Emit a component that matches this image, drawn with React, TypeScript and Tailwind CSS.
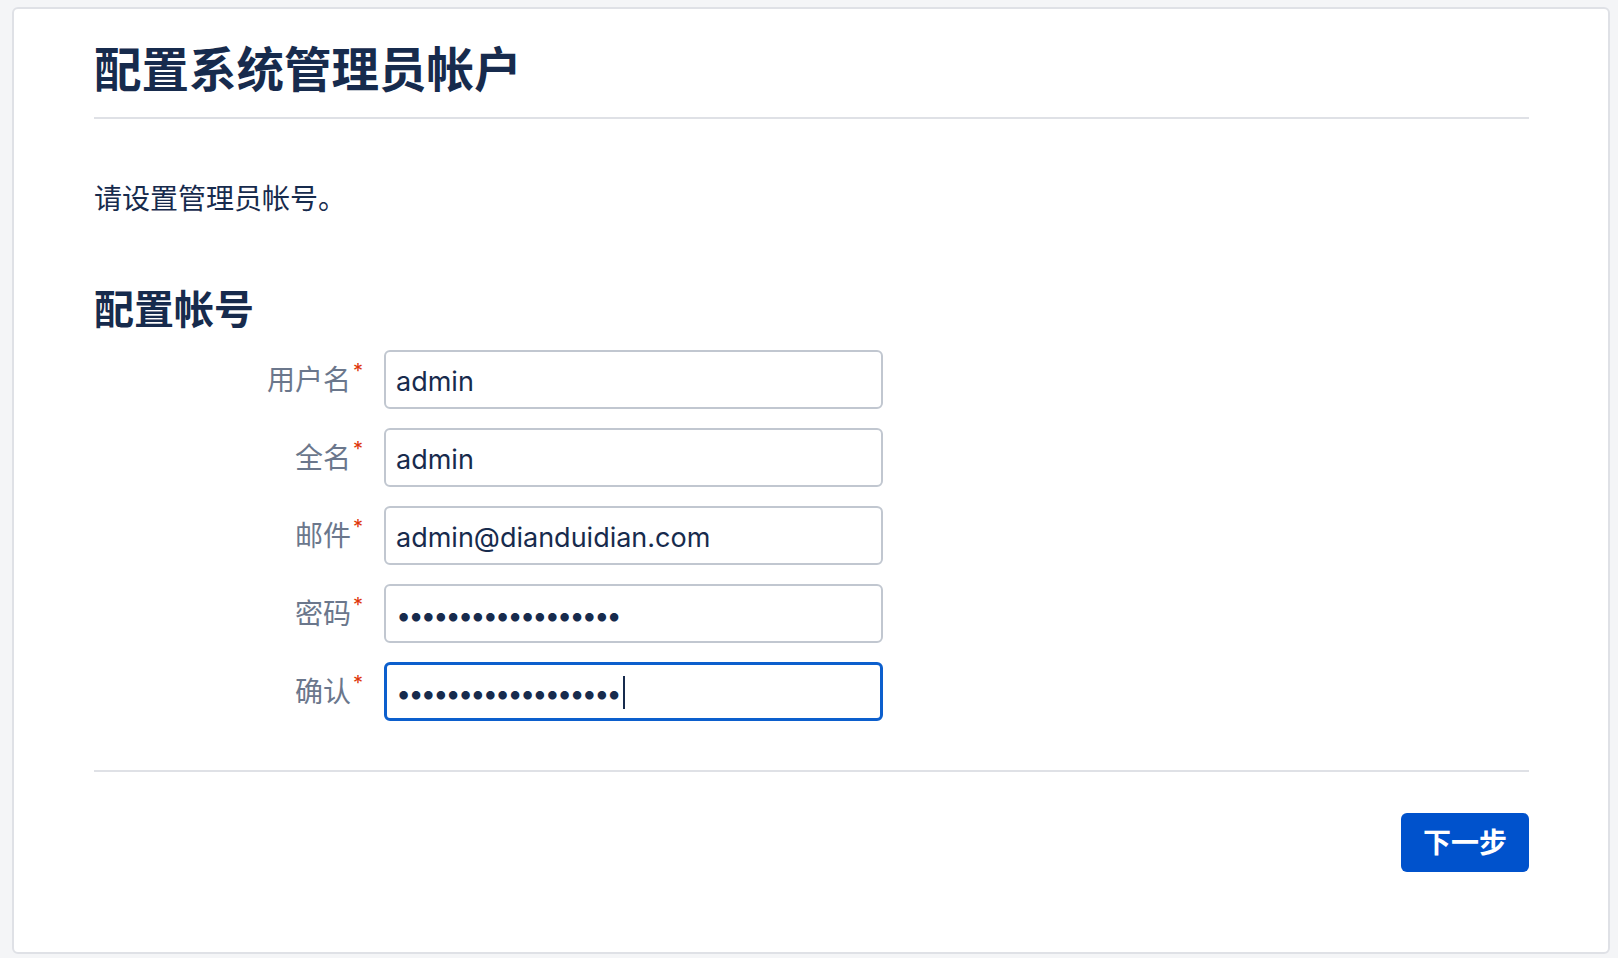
const fields = [
  { label: "用户名", type: "text", value: "admin" },
  { label: "全名", type: "text", value: "admin" },
  { label: "邮件", type: "email", value: "admin@dianduidian.com" },
  { label: "密码", type: "password", value: "passwordpassword12" },
];

const font = "font-['Inter','Noto_Sans_CJK_SC',sans-serif]";

function Label({ text }: { text: string }) {
  return (
    <label className="w-[269px] shrink-0 text-right text-[28px] text-[#6b778c] leading-none">
      {text}
      <span className="relative -top-[12px] ml-[2px] text-[20px] text-[#de350b]">*</span>
    </label>
  );
}

export default function App() {
  return (
    <div className={`min-h-screen bg-[#f4f5f7] pt-[7px] pl-[12px] pr-[8px] pb-[4px] ${font}`}>
      <div className="h-[947px] rounded-md border-2 border-[#dfe1e6] bg-white pt-[32px] pl-[80px] pr-[79px] text-[#172b4d]">
        <h1 className="border-b-2 border-[#dfe1e6] pb-[19px] text-[47.5px] font-bold leading-[1.2]">
          配置系统管理员帐户
        </h1>

        <p className="mt-[59px] text-[28px] leading-[1.5]">请设置管理员帐号。</p>

        <h2 className="mt-[66px] text-[40px] font-bold leading-[1.2]">配置帐号</h2>

        <form className="mt-[16px] flex flex-col gap-[19px]">
          {fields.map((f) => (
            <div key={f.label} className="flex items-center">
              <Label text={f.label} />
              <input
                type={f.type}
                readOnly
                defaultValue={f.value}
                className={`ml-[21px] h-[59px] w-[499px] rounded-md border-2 border-[#c1c7d0] bg-white px-[10px] pt-[3px] text-[27px] text-[#172b4d] outline-none ${
                  f.type === "password" ? "tracking-[-2.8px]" : ""
                }`}
              />
            </div>
          ))}
          <div className="flex items-center">
            <Label text="确认" />
            <div className="relative ml-[21px]">
              <input
                type="password"
                readOnly
                defaultValue="passwordpassword12"
                className="h-[59px] w-[499px] rounded-md border-[3px] border-[#0c5fcd] bg-white px-[9px] pt-[3px] text-[27px] tracking-[-2.8px] text-[#172b4d] outline-none"
              />
              <span className="absolute left-[239px] top-[14px] h-[33px] w-[2px] bg-[#172b4d]" />
            </div>
          </div>
        </form>

        <div className="mt-[49px] border-t-2 border-[#dfe1e6]" />

        <div className="mt-[41px] flex justify-end">
          <button
            type="button"
            className="h-[59px] w-[128px] rounded-md bg-[#0052cc] text-[28px] font-bold text-white"
          >
            下一步
          </button>
        </div>
      </div>
    </div>
  );
}
